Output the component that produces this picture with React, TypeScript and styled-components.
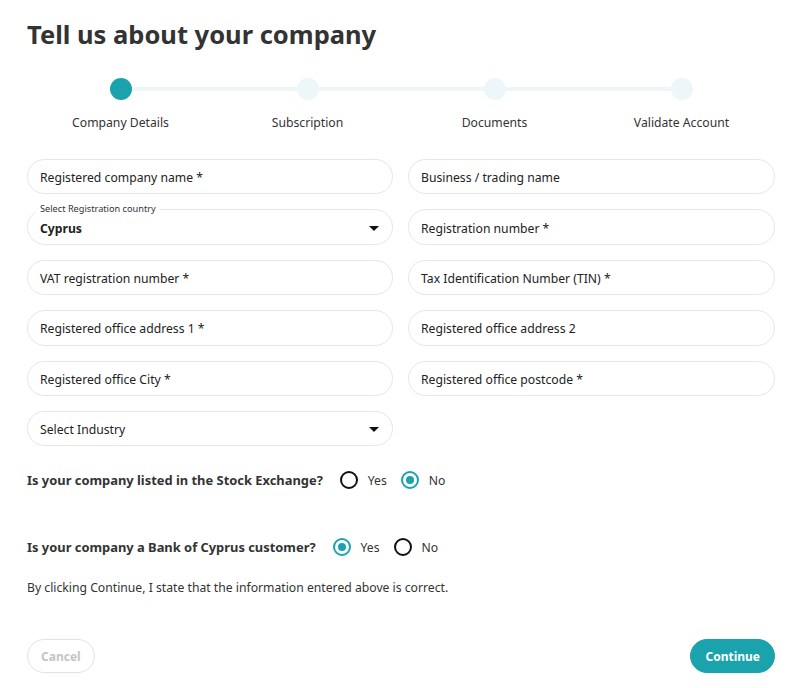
import React from "react";
import styled, { createGlobalStyle } from "styled-components";

const Global = createGlobalStyle`
  html, body { margin: 0; padding: 0; background: #fff; }
  body { font-family: "Noto Sans", "Open Sans", sans-serif; color: #222; }
  * { box-sizing: border-box; }
`;

const TEAL = "#1ba3ad";

const Page = styled.div`
  width: 799px;
  padding: 16px 24px 0 27px;
`;

const Title = styled.h1`
  margin: 0;
  font-size: 25.5px;
  font-weight: 700;
  color: #333;
  line-height: 36px;
`;

const Stepper = styled.div`
  display: grid;
  grid-template-columns: repeat(4, 1fr);
  margin-top: 26px;
  width: 748px;
`;

const Step = styled.div<{ $first?: boolean; $last?: boolean }>`
  position: relative;
  display: flex;
  flex-direction: column;
  align-items: center;
  &::before {
    content: "";
    position: absolute;
    top: 9px;
    height: 4px;
    background: #edf6f8;
    left: ${(p) => (p.$first ? "50%" : "0")};
    right: ${(p) => (p.$last ? "50%" : "0")};
  }
`;

const Dot = styled.div<{ $active?: boolean }>`
  position: relative;
  width: 22px;
  height: 22px;
  border-radius: 50%;
  background: ${(p) => (p.$active ? TEAL : "#edf6f8")};
`;

const StepLabel = styled.div`
  margin-top: 14px;
  font-size: 12.2px;
  color: #333;
`;

const Grid = styled.div`
  display: grid;
  grid-template-columns: 366px 367px;
  column-gap: 15px;
  row-gap: 15px;
  margin-top: 28px;
  width: 748px;
`;

const Field = styled.div`
  position: relative;
  height: 35.4px;
  border: 1px solid #e3e6ee;
  border-radius: 18px;
  display: flex;
  align-items: center;
  padding: 2px 12px 0 12px;
  font-size: 12.2px;
  color: #222;
`;

const FieldText = styled.span<{ $bold?: boolean }>`
  flex: 1;
  font-weight: ${(p) => (p.$bold ? 700 : 400)};
`;

const FloatLabel = styled.span`
  position: absolute;
  top: -7px;
  left: 8px;
  padding: 0 4px;
  background: #fff;
  font-size: 9.2px;
  color: #333;
  line-height: 12px;
`;

const Caret = styled.span`
  width: 0;
  height: 0;
  border-left: 5px solid transparent;
  border-right: 5px solid transparent;
  border-top: 5px solid #111;
  margin-right: 1px;
`;

const Question = styled.div<{ $top: number }>`
  display: flex;
  align-items: center;
  margin-top: ${(p) => p.$top}px;
  height: 24px;
`;

const QText = styled.span`
  font-size: 12.9px;
  font-weight: 700;
  color: #333;
  margin-right: 17px;
`;

const Option = styled.label`
  display: flex;
  align-items: center;
  font-size: 12.2px;
  color: #333;
  margin-right: 14px;
`;

const Radio = styled.span<{ $checked?: boolean }>`
  width: 18px;
  height: 18px;
  border-radius: 50%;
  border: 2px solid ${(p) => (p.$checked ? TEAL : "#111")};
  display: flex;
  align-items: center;
  justify-content: center;
  margin-right: 10px;
  &::after {
    content: "";
    width: 8px;
    height: 8px;
    border-radius: 50%;
    background: ${(p) => (p.$checked ? TEAL : "transparent")};
  }
`;

const Note = styled.p`
  margin: 20px 0 0;
  font-size: 12.2px;
  color: #333;
`;

const Actions = styled.div`
  display: flex;
  justify-content: space-between;
  margin-top: 43px;
  width: 748px;
`;

const Button = styled.button<{ $primary?: boolean }>`
  height: 34px;
  border-radius: 17px;
  font-family: inherit;
  font-size: 12px;
  font-weight: 700;
  padding: 0 ${(p) => (p.$primary ? 14 : 13)}px;
  border: 1px solid ${(p) => (p.$primary ? TEAL : "#e3e3e3")};
  background: ${(p) => (p.$primary ? TEAL : "#fff")};
  color: ${(p) => (p.$primary ? "#fff" : "#c4c4c4")};
`;

const steps = ["Company Details", "Subscription", "Documents", "Validate Account"];

const fields: { text: string; select?: boolean; float?: string; bold?: boolean }[] = [
  { text: "Registered company name *" },
  { text: "Business / trading name" },
  { text: "Cyprus", select: true, float: "Select Registration country", bold: true },
  { text: "Registration number *" },
  { text: "VAT registration number *" },
  { text: "Tax Identification Number (TIN) *" },
  { text: "Registered office address 1 *" },
  { text: "Registered office address 2" },
  { text: "Registered office City *" },
  { text: "Registered office postcode *" },
  { text: "Select Industry", select: true },
];

export default function App() {
  return (
    <>
      <Global />
      <Page>
        <Title>Tell us about your company</Title>
        <Stepper>
          {steps.map((s, i) => (
            <Step key={s} $first={i === 0} $last={i === steps.length - 1}>
              <Dot $active={i === 0} />
              <StepLabel>{s}</StepLabel>
            </Step>
          ))}
        </Stepper>
        <Grid>
          {fields.map((f) => (
            <Field key={f.text}>
              {f.float && <FloatLabel>{f.float}</FloatLabel>}
              <FieldText $bold={f.bold}>{f.text}</FieldText>
              {f.select && <Caret />}
            </Field>
          ))}
        </Grid>
        <Question $top={22}>
          <QText>Is your company listed in the Stock Exchange?</QText>
          <Option>
            <Radio />
            Yes
          </Option>
          <Option>
            <Radio $checked />
            No
          </Option>
        </Question>
        <Question $top={43}>
          <QText>Is your company a Bank of Cyprus customer?</QText>
          <Option>
            <Radio $checked />
            Yes
          </Option>
          <Option>
            <Radio />
            No
          </Option>
        </Question>
        <Note>By clicking Continue, I state that the information entered above is correct.</Note>
        <Actions>
          <Button>Cancel</Button>
          <Button $primary>Continue</Button>
        </Actions>
      </Page>
    </>
  );
}
